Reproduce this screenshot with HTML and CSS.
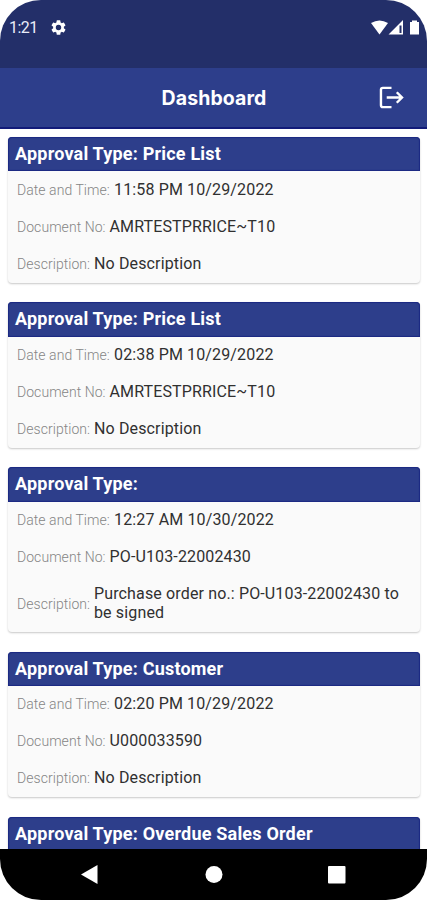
FILE: index.html
```html
<!DOCTYPE html>
<html lang="en">

<head>
    <meta charset="UTF-8">
    <title>Dashboard</title>
    <link rel="stylesheet" href="styles.css">
</head>

<body>
    <div class="phone">
        <div class="status_bar">
            <span class="clock">1:21</span>
            <svg class="gear" viewBox="2 2 20 20">
                <path fill-rule="evenodd" d="M19.14 12.94c.04-.3.06-.61.06-.94 0-.32-.02-.64-.07-.94l2.03-1.58a.5.5 0 0 0 .12-.61l-1.92-3.32a.5.5 0 0 0-.59-.22l-2.39.96a7 7 0 0 0-1.62-.94l-.36-2.54A.5.5 0 0 0 13.92 2.4h-3.84a.5.5 0 0 0-.47.41l-.36 2.54c-.59.24-1.13.57-1.62.94l-2.39-.96a.5.5 0 0 0-.59.22L2.74 8.87a.5.5 0 0 0 .12.61l2.03 1.58a6 6 0 0 0 0 1.88l-2.03 1.58a.5.5 0 0 0-.12.61l1.92 3.32c.12.22.37.29.59.22l2.39-.96c.5.38 1.03.7 1.62.94l.36 2.54c.05.24.24.41.48.41h3.84c.24 0 .44-.17.47-.41l.36-2.54a7 7 0 0 0 1.62-.94l2.39.96c.22.08.47 0 .59-.22l1.92-3.32a.5.5 0 0 0-.12-.61zM12 15.6a3.6 3.6 0 1 1 0-7.2 3.6 3.6 0 0 1 0 7.2z" />
            </svg>
            <svg class="signals" viewBox="0 0 50 16">
                <path d="M0 3Q8.5-2 17 3L8.5 14.5z" />
                <path fill-rule="evenodd" d="M32 0v14.5H17.5zM28.5 5.5V13h2V5.500z" />
                <path d="M39 2h2V.5h5V2h2v12.5h-9z" />
            </svg>
        </div>

        <div class="app_bar">
            <h1>Dashboard</h1>
            <svg class="logout" viewBox="0 0 26 24">
                <path d="M13 2H4Q2 2 2 4v16q0 2 2 2h9M8 12h16M18.5 6.5 24 12l-5.5 5.5" />
            </svg>
        </div>

        <div class="list">
            <div class="card">
                <h2>Approval Type: Price List</h2>
                <p><label class="date_label">Date and Time:</label><span>11:58 PM 10/29/2022</span></p>
                <p><label class="doc_label">Document No:</label><span>AMRTESTPRRICE~T10</span></p>
                <p><label class="desc_label">Description:</label><span>No Description</span></p>
            </div>
            <div class="card">
                <h2>Approval Type: Price List</h2>
                <p><label class="date_label">Date and Time:</label><span>02:38 PM 10/29/2022</span></p>
                <p><label class="doc_label">Document No:</label><span>AMRTESTPRRICE~T10</span></p>
                <p><label class="desc_label">Description:</label><span>No Description</span></p>
            </div>
            <div class="card">
                <h2>Approval Type:</h2>
                <p><label class="date_label">Date and Time:</label><span>12:27 AM 10/30/2022</span></p>
                <p><label class="doc_label">Document No:</label><span>PO-U103-22002430</span></p>
                <p><label class="desc_label">Description:</label><span>Purchase order no.: PO-U103-22002430 to be signed</span></p>
            </div>
            <div class="card">
                <h2>Approval Type: Customer</h2>
                <p><label class="date_label">Date and Time:</label><span>02:20 PM 10/29/2022</span></p>
                <p><label class="doc_label">Document No:</label><span>U000033590</span></p>
                <p><label class="desc_label">Description:</label><span>No Description</span></p>
            </div>
            <div class="card">
                <h2>Approval Type: Overdue Sales Order</h2>
            </div>
        </div>

        <div class="nav_bar">
            <svg viewBox="0 0 427 50">
                <path d="M81 25.5 97.5 16v19z" />
                <circle cx="214" cy="25.5" r="8.5" />
                <rect x="328" y="17" width="17.5" height="17.5" rx="1" />
            </svg>
        </div>
    </div>
</body>

</html>
```

FILE: styles.css
```css
body {
    margin: 0;
    background-color: #ffffff;
    font-family: Roboto, "Liberation Sans", sans-serif;
}

.phone {
    display: flex;
    flex-direction: column;
    width: 427px;
    height: 900px;
    overflow: hidden;
    border-radius: 41px;
    background-color: #ffffff;
}

.status_bar {
    display: flex;
    align-items: flex-start;
    flex: none;
    height: 68px;
    padding: 0 6px 0 9px;
    box-sizing: border-box;
    background-color: #232f69;
    color: #e9ecf8;
}

.clock {
    width: 42px;
    margin-top: 18px;
    font-size: 16px;
    line-height: 20px;
    letter-spacing: -0.5px;
}

.status_bar svg {
    fill: #ffffff;
}

.gear {
    width: 15px;
    height: 15px;
    margin-top: 20px;
}

.signals {
    width: 50px;
    height: 16px;
    margin: 20px 0 0 auto;
}

.app_bar {
    display: flex;
    align-items: center;
    flex: none;
    height: 61px;
    padding: 0 23px 0 48px;
    box-sizing: border-box;
    border-bottom: 2px solid #121b79;
    background-color: #2d3e8b;
    color: #ffffff;
}

.app_bar h1 {
    flex: 1;
    margin: 0;
    padding: 1px 0 0 1px;
    text-align: center;
    font-family: Inter, sans-serif;
    font-size: 19.5px;
    font-weight: 700;
    letter-spacing: 0.1px;
}

.logout {
    width: 25px;
    height: 23px;
    fill: none;
    stroke: #ffffff;
    stroke-width: 2.5;
}

.list {
    display: flex;
    flex-direction: column;
    flex: 1;
    gap: 19.6px;
    min-height: 0;
    padding: 8.3px 7px 0 8px;
    overflow: hidden;
}

.card {
    flex: none;
    padding-bottom: 0.5px;
    border-radius: 4px;
    background-color: #fafafa;
    box-shadow: 0 1px 2px rgba(0, 0, 0, 0.22);
}

.card h2 {
    height: 34.2px;
    margin: 0;
    padding-left: 7px;
    border-radius: 4px 4px 0 0;
    box-shadow: inset 0 0 1px 1px #1b2882;
    background-color: #2d3e8b;
    color: #ffffff;
    font-size: 18px;
    font-weight: 700;
    line-height: 34.4px;
    letter-spacing: 0.2px;
}

.card p {
    display: flex;
    align-items: center;
    margin: 0;
    padding: 9.6px 18px 8.4px 9px;
    line-height: 18.95px;
}

.card label {
    flex: none;
    color: #858585;
    font-size: 14px;
    font-weight: 300;
    letter-spacing: 0.05px;
    white-space: nowrap;
}

.date_label {
    width: 97px;
}

.doc_label {
    width: 92.5px;
}

.desc_label {
    width: 77px;
}

.card span {
    color: #303030;
    font-size: 16px;
    letter-spacing: 0.14px;
}

.nav_bar {
    flex: none;
    height: 51px;
    background-color: #000000;
}

.nav_bar svg {
    display: block;
    width: 427px;
    height: 50px;
    fill: #ffffff;
}
```
